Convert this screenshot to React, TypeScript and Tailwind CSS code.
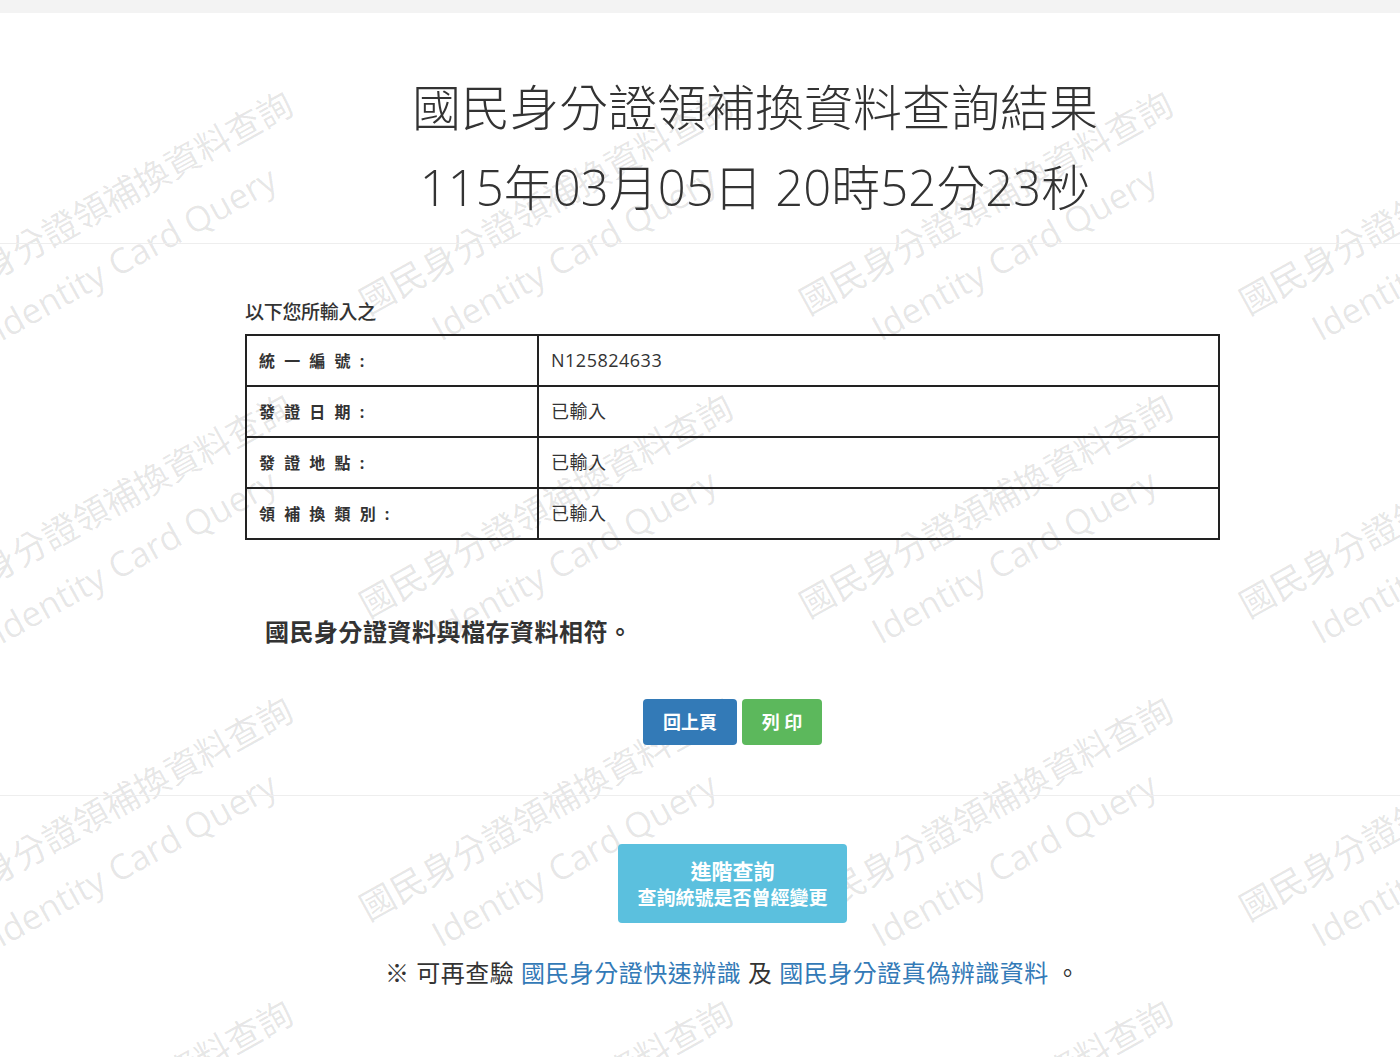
import React from 'react';

const rows = [
  { label: '統 一 編 號 :', value: 'N125824633' },
  { label: '發 證 日 期 :', value: '已輸入' },
  { label: '發 證 地 點 :', value: '已輸入' },
  { label: '領 補 換 類 別 :', value: '已輸入' },
];

const font = "font-['Open_Sans','Noto_Sans_CJK_TC',sans-serif]";

function Watermark() {
  const tiles = Array.from({ length: 16 });
  return (
    <div className="pointer-events-none absolute inset-0 z-0 overflow-hidden" aria-hidden>
      <div className="absolute left-[-100px] top-[76px] grid grid-cols-[repeat(4,440px)] grid-rows-[repeat(4,303px)]">
        {tiles.map((_, i) => (
          <div key={i} className="flex items-center justify-center">
            <div className="flex -rotate-[29deg] flex-col items-center whitespace-nowrap text-[35px] leading-[58px] text-black/[0.1]">
              <span>國民身分證領補換資料查詢</span>
              <span>Identity Card Query</span>
            </div>
          </div>
        ))}
      </div>
    </div>
  );
}

export default function App() {
  return (
    <div className={`relative min-h-[1057px] overflow-hidden bg-white text-[#333] ${font}`}>
      <Watermark />
      <div className="relative z-10">
        <div className="h-[13px] bg-[#f3f3f3]" />

        <h1 className="mt-[54px] pl-[110px] text-center text-[49px] font-light leading-[80px] text-[#333]">
          <div>國民身分證領補換資料查詢結果</div>
          <div>115年03月05日 20時52分23秒</div>
        </h1>

        <hr className="mt-[16px] border-t border-[#eeeeee]" />

        <div className="ml-[245px] w-[975px]">
          <p className="mt-[57px] text-[19px] font-medium leading-[22px] tracking-[-0.3px]">以下您所輸入之</p>
          <table className="mt-[11px] w-full border-collapse border-2 border-[#222]">
            <tbody>
              {rows.map((r) => (
                <tr key={r.label} className="h-[51px]">
                  <td className="w-[292px] border-2 border-[#222] pl-[12px] text-[16px] font-bold tracking-[2.5px]">
                    {r.label}
                  </td>
                  <td className="border-2 border-[#222] pl-[12px] text-[18px] tracking-[0.5px]">{r.value}</td>
                </tr>
              ))}
            </tbody>
          </table>

          <p className="ml-[20px] mt-[75px] text-[24px] font-bold leading-[34px] tracking-[0.5px]">
            國民身分證資料與檔存資料相符。
          </p>

          <div className="mt-[50px] flex justify-center gap-[5px]">
            <button className="h-[46px] w-[94px] rounded-[4px] bg-[#337ab7] text-[18px] font-bold text-white">
              回上頁
            </button>
            <button className="h-[46px] w-[80px] rounded-[4px] bg-[#5cb85c] text-[18px] font-bold text-white">
              列 印
            </button>
          </div>
        </div>

        <hr className="mt-[50px] border-t border-[#eeeeee]" />

        <div className="ml-[245px] flex w-[975px] flex-col items-center">
          <button className="mt-[48px] flex h-[79px] w-[229px] flex-col items-center justify-center rounded-[4px] bg-[#5bc0de] text-white">
            <span className="text-[21px] font-bold leading-[28px]">進階查詢</span>
            <span className="text-[19px] font-bold leading-[26px]">查詢統號是否曾經變更</span>
          </button>

          <p className="mt-[34px] text-[24px] leading-[32px] tracking-[0.5px]">
            ※ 可再查驗 <a className="text-[#337ab7]">國民身分證快速辨識</a> 及{' '}
            <a className="text-[#337ab7]">國民身分證真偽辨識資料</a> 。
          </p>
        </div>
      </div>
    </div>
  );
}
